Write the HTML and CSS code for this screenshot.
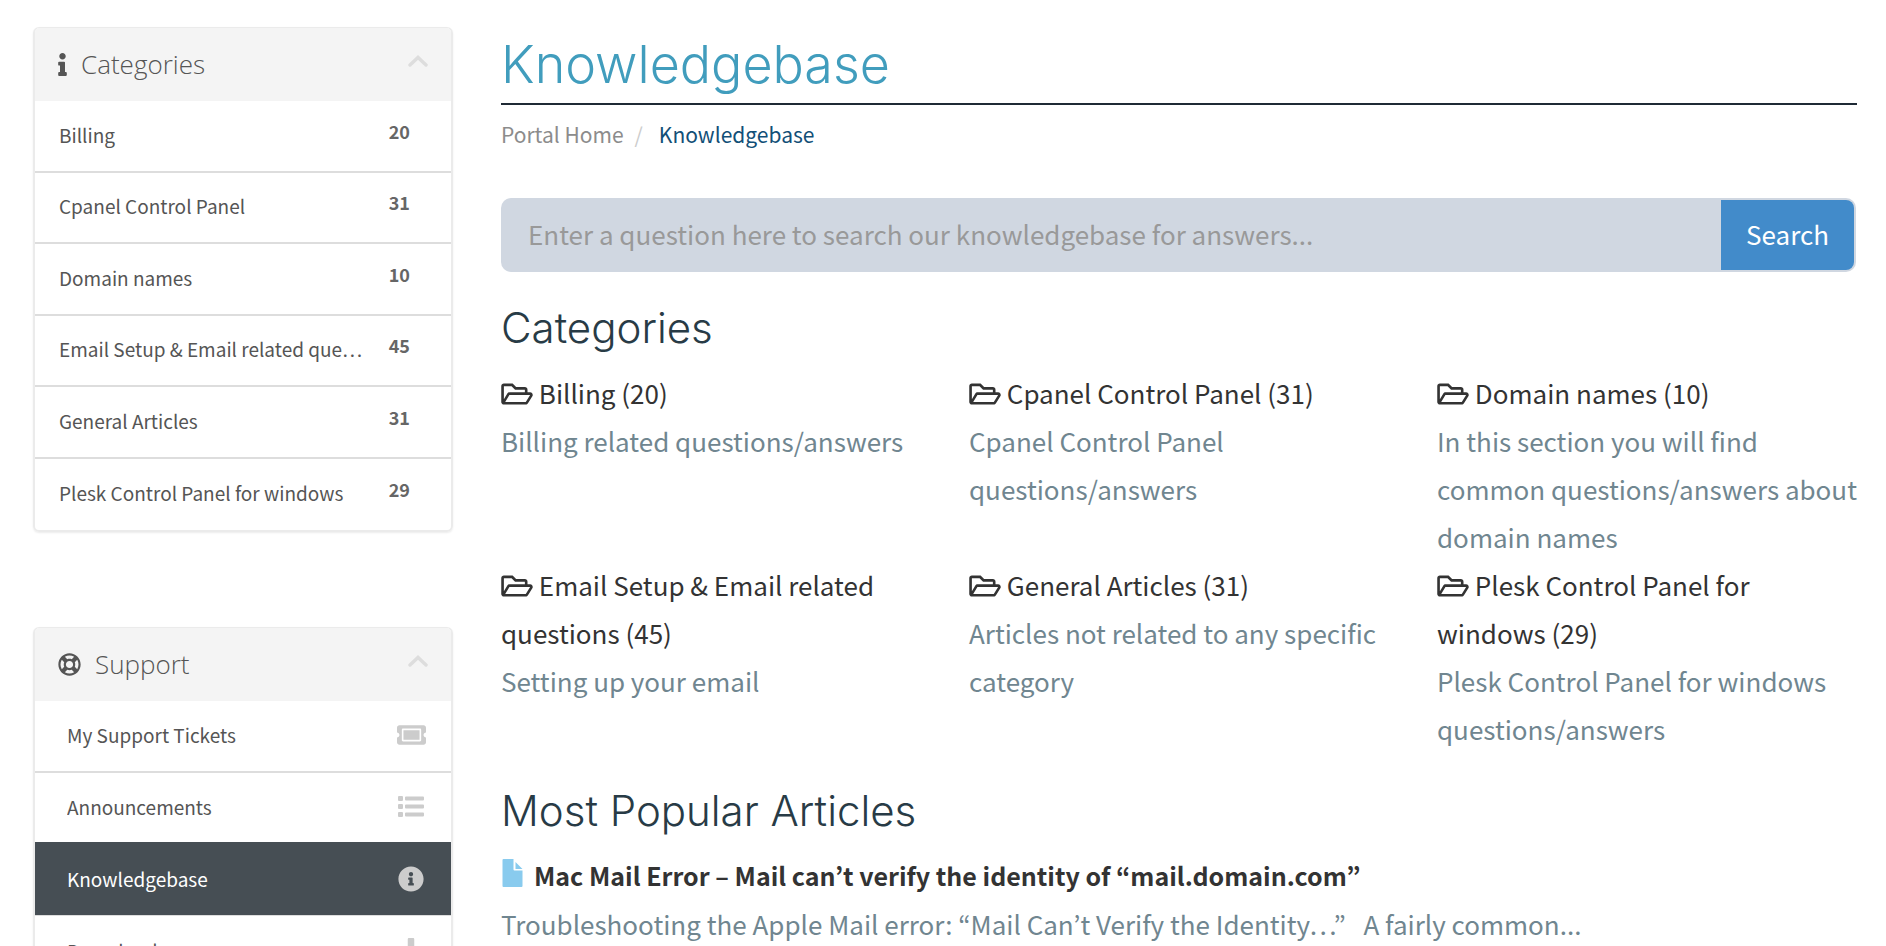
FILE: index.html
```html
<!DOCTYPE html>
<html lang="en">
<head>
<meta charset="utf-8">
<title>Knowledgebase</title>
<link rel="stylesheet" href="styles.css">
</head>
<body>
<svg class="sprite" aria-hidden="true">
  <symbol id="folder" viewBox="0 0 576 512"><path d="M527.9 224H480v-48c0-26.5-21.5-48-48-48H272l-64-64H48C21.5 64 0 85.5 0 112v288c0 26.5 21.5 48 48 48h400c16.5 0 31.9-8.5 40.7-22.6l79.9-128c20-31.9-3-73.4-40.7-73.4zM48 118c0-3.3 2.7-6 6-6h134.1l64 64H426c3.3 0 6 2.7 6 6v42H152c-16.8 0-32.4 8.8-41.1 23.2L48 351.4zm400 282H72l77.2-128H528z"/></symbol>
  <symbol id="chevron" viewBox="0 0 20 12"><path d="M2 10l8-7.600 8 7.600" fill="none" stroke="currentColor" stroke-width="3.400" stroke-linecap="round"/></symbol>
</svg>
<div class="page">
  <aside class="sidebar">
    <section class="panel">
      <header class="panel-head">
        <svg class="icon-info" viewBox="0 0 192 512"><path d="M20 424.229h20V279.771H20c-11.046 0-20-8.954-20-20V212c0-11.046 8.954-20 20-20h112c11.046 0 20 8.954 20 20v212.229h20c11.046 0 20 8.954 20 20V492c0 11.046-8.954 20-20 20H20c-11.046 0-20-8.954-20-20v-47.771c0-11.046 8.954-20 20-20zM96 0C56.235 0 24 32.235 24 72s32.235 72 72 72 72-32.235 72-72S135.764 0 96 0z"/></svg>
        <h3 class="panel-title">Categories</h3>
        <button class="collapse" type="button" aria-label="Collapse categories"><svg class="icon-chevron"><use href="#chevron"/></svg></button>
      </header>
      <nav class="list">
        <a class="item" href="#"><span class="label">Billing</span><span class="count">20</span></a>
        <a class="item" href="#"><span class="label">Cpanel Control Panel</span><span class="count">31</span></a>
        <a class="item" href="#"><span class="label">Domain names</span><span class="count">10</span></a>
        <a class="item" href="#"><span class="label">Email Setup &amp; Email related que…</span><span class="count">45</span></a>
        <a class="item" href="#"><span class="label">General Articles</span><span class="count">31</span></a>
        <a class="item" href="#"><span class="label">Plesk Control Panel for windows</span><span class="count">29</span></a>
      </nav>
    </section>
    <section class="panel">
      <header class="panel-head">
        <svg class="icon-ring" viewBox="0 0 512 512"><path d="M256 504c136.967 0 248-111.033 248-248S392.967 8 256 8 8 119.033 8 256s111.033 248 248 248zm-103.398-76.720l53.411-53.411c31.806 13.506 68.128 13.522 99.974 0l53.411 53.411c-63.217 38.319-143.579 38.319-206.796 0zM336 256c0 44.112-35.888 80-80 80s-80-35.888-80-80 35.888-80 80-80 80 35.888 80 80zm91.280 103.398l-53.411-53.411c13.505-31.806 13.522-68.128 0-99.974l53.411-53.411c38.319 63.217 38.319 143.579 0 206.796zM359.397 84.720l-53.411 53.411c-31.806-13.505-68.128-13.522-99.973 0L152.602 84.720c63.217-38.319 143.579-38.319 206.795 0zM84.720 152.602l53.411 53.411c-13.506 31.806-13.522 68.128 0 99.974L84.720 359.398c-38.319-63.217-38.319-143.579 0-206.796z"/></svg>
        <h3 class="panel-title">Support</h3>
        <button class="collapse" type="button" aria-label="Collapse support"><svg class="icon-chevron"><use href="#chevron"/></svg></button>
      </header>
      <nav class="list list-menu">
        <a class="item" href="#"><span class="label">My Support Tickets</span><span class="slot"><svg class="icon-wide" viewBox="0 0 576 512"><path d="M128 160h320v192H128V160zm400 96c0 26.510 21.490 48 48 48v96c0 26.510-21.490 48-48 48H48c-26.510 0-48-21.490-48-48v-96c26.510 0 48-21.490 48-48s-21.490-48-48-48v-96c0-26.510 21.490-48 48-48h480c26.510 0 48 21.490 48 48v96c-26.510 0-48 21.490-48 48zm-48-104c0-13.255-10.745-24-24-24H120c-13.255 0-24 10.745-24 24v208c0 13.255 10.745 24 24 24h336c13.255 0 24-10.745 24-24V152z"/></svg></span></a>
        <a class="item" href="#"><span class="label">Announcements</span><span class="slot"><svg class="icon" viewBox="0 0 26 26"><path d="M1 2h3a1 1 0 0 1 1 1v3a1 1 0 0 1-1 1H1a1 1 0 0 1-1-1V3a1 1 0 0 1 1-1zM1 10h3a1 1 0 0 1 1 1v3a1 1 0 0 1-1 1H1a1 1 0 0 1-1-1v-3a1 1 0 0 1 1-1zM1 18h3a1 1 0 0 1 1 1v3a1 1 0 0 1-1 1H1a1 1 0 0 1-1-1v-3a1 1 0 0 1 1-1zM8 2.500h17a1 1 0 0 1 1 1v2a1 1 0 0 1-1 1H8a1 1 0 0 1-1-1v-2a1 1 0 0 1 1-1zM8 10.500h17a1 1 0 0 1 1 1v2a1 1 0 0 1-1 1H8a1 1 0 0 1-1-1v-2a1 1 0 0 1 1-1zM8 18.500h17a1 1 0 0 1 1 1v2a1 1 0 0 1-1 1H8a1 1 0 0 1-1-1v-2a1 1 0 0 1 1-1z"/></svg></span></a>
        <a class="item active" href="#" aria-current="page"><span class="label">Knowledgebase</span><span class="slot"><svg class="icon" viewBox="0 0 512 512"><path d="M256 8C119.043 8 8 119.083 8 256c0 136.997 111.043 248 248 248s248-111.003 248-248C504 119.083 392.957 8 256 8zm0 110c23.196 0 42 18.804 42 42s-18.804 42-42 42-42-18.804-42-42 18.804-42 42-42zm56 254c0 6.627-5.373 12-12 12h-88c-6.627 0-12-5.373-12-12v-24c0-6.627 5.373-12 12-12h12v-64h-12c-6.627 0-12-5.373-12-12v-24c0-6.627 5.373-12 12-12h64c6.627 0 12 5.373 12 12v100h12c6.627 0 12 5.373 12 12v24z"/></svg></span></a>
        <a class="item" href="#"><span class="label">Downloads</span><span class="slot"><svg class="icon" viewBox="0 0 512 512"><path d="M216 0h80c13.300 0 24 10.700 24 24v168h87.700c17.800 0 26.700 21.500 14.100 34.100L269.700 378.300c-7.500 7.500-19.800 7.500-27.300 0L90.100 226.100c-12.600-12.600-3.700-34.100 14.100-34.100H192V24c0-13.300 10.700-24 24-24zm296 376v112c0 13.300-10.700 24-24 24H24c-13.300 0-24-10.700-24-24V376c0-13.300 10.700-24 24-24h146.700l49 49c20.100 20.100 52.500 20.100 72.600 0l49-49H488c13.300 0 24 10.700 24 24z"/></svg></span></a>
      </nav>
    </section>
  </aside>
  <main class="main">
    <h1 class="title">Knowledgebase</h1>
    <nav class="crumbs" aria-label="Breadcrumb"><a class="crumb" href="#">Portal Home</a><span class="slash">/</span><a class="crumb current" href="#">Knowledgebase</a></nav>
    <form class="search">
      <input class="search-input" type="text" aria-label="Search the knowledgebase" placeholder="Enter a question here to search our knowledgebase for answers...">
      <button class="search-button" type="button">Search</button>
    </form>
    <h2 class="heading">Categories</h2>
    <div class="categories">
      <div><a class="cat" href="#"><svg class="icon-folder"><use href="#folder"/></svg> Billing (20)</a><p class="text">Billing related questions/answers</p></div>
      <div><a class="cat" href="#"><svg class="icon-folder"><use href="#folder"/></svg> Cpanel Control Panel (31)</a><p class="text">Cpanel Control Panel questions/answers</p></div>
      <div><a class="cat" href="#"><svg class="icon-folder"><use href="#folder"/></svg> Domain names (10)</a><p class="text">In this section you will find common questions/answers about domain names</p></div>
      <div><a class="cat" href="#"><svg class="icon-folder"><use href="#folder"/></svg> Email Setup &amp; Email related questions (45)</a><p class="text">Setting up your email</p></div>
      <div><a class="cat" href="#"><svg class="icon-folder"><use href="#folder"/></svg> General Articles (31)</a><p class="text">Articles not related to any specific category</p></div>
      <div><a class="cat" href="#"><svg class="icon-folder"><use href="#folder"/></svg> Plesk Control Panel for windows (29)</a><p class="text">Plesk Control Panel for windows questions/answers</p></div>
    </div>
    <h2 class="heading popular">Most Popular Articles</h2>
    <article>
      <a class="article-link" href="#"><svg class="icon-file" viewBox="0 0 20 28"><path d="M1 0h10v10.500a1 1 0 0 0 1 1h8V27a1 1 0 0 1-1 1H1a1 1 0 0 1-1-1V1a1 1 0 0 1 1-1zM13 3l7 7h-7z"/></svg>Mac Mail Error – Mail can’t verify the identity of “mail.domain.com”</a>
      <p class="text">Troubleshooting the Apple Mail error: “Mail Can’t Verify the Identity…”&nbsp;&nbsp; A fairly common...</p>
    </article>
  </main>
</div>
</body>
</html>
```
FILE: styles.css
```css
* {
  box-sizing: border-box;
}

html {
  overflow: hidden;
}

body {
  margin: 0;
  background: #fff;
  color: #708690;
  font-family: "Noto Sans CJK KR", "Noto Sans", sans-serif;
  font-size: 26px;
  line-height: 48px;
}

h1, h2, h3, p {
  margin: 0;
}

a {
  text-decoration: none;
}

svg {
  fill: currentColor;
  flex: none;
}

.sprite {
  display: none;
}

.page {
  display: grid;
  grid-template-columns: repeat(4, minmax(0, 1fr));
  column-gap: 48px;
  height: 100vh;
  padding: 27px 29px 0 33px;
}

.sidebar {
  display: flex;
  flex-direction: column;
  gap: 95px;
}

.main {
  grid-column: span 3;
}

/* Sidebar panels */

.panel {
  border: 2px solid #ebebeb;
  border-top-width: 1px;
  border-radius: 6px;
  box-shadow: 0 1px 2px rgba(0, 0, 0, 0.08);
  overflow: hidden;
  flex: none;
}

.panel-head {
  display: flex;
  align-items: center;
  height: 73px;
  padding: 0 23px;
  background: #f4f4f4;
  color: #555;
}

.panel-title {
  flex: 1;
  margin: 0 0 2px 14px;
  font-family: "Open Sans", sans-serif;
  font-size: 26px;
  font-weight: 300;
}

.collapse {
  display: flex;
  padding: 0 0 8px;
  border: 0;
  background: none;
  color: #ddd;
}

.icon-info {
  width: 9px;
  height: 23px;
}

.icon-ring {
  width: 23px;
  height: 23px;
}

.icon-chevron {
  width: 20px;
  height: 12px;
}

.item {
  display: flex;
  gap: 20px;
  align-items: center;
  height: 72px;
  padding: 0 41px 3px 24px;
  border-bottom: 2px solid #ddd;
  color: #555;
  font-size: 19px;
}

.item:nth-child(even) {
  height: 71px;
}

.item:last-child {
  border-bottom: 0;
}

.label {
  flex: 1;
  min-width: 0;
  overflow: hidden;
  text-overflow: ellipsis;
  white-space: nowrap;
}

.count {
  padding-bottom: 8px;
  color: #666;
  font-size: 18px;
  font-weight: 700;
}

.list-menu .item {
  padding: 0 25px 2px 32px;
}

.slot {
  display: flex;
  justify-content: center;
  width: 30px;
  color: #ccc;
}

.icon {
  width: 26px;
  height: 26px;
}

.icon-wide {
  width: 29px;
  height: 26px;
}

.item:has(+ .active) {
  border-color: #464e54;
}

.item.active {
  border-bottom-width: 1px;
  background: #464e54;
  background-clip: padding-box;
  color: #fff;
}

/* Main column */

.title {
  padding: 3px 0;
  border-bottom: 2px solid #1f2a35;
  color: #419dbd;
  font-family: Inter, sans-serif;
  font-size: 52px;
  font-weight: 300;
  line-height: 70px;
}

.crumbs {
  display: flex;
  margin-top: 5px;
  font-size: 21px;
}

.crumb {
  color: #8c8c8c;
}

.slash {
  margin: 0 16px 0 11px;
  color: #ccc;
}

.current {
  color: #124f77;
}

.search {
  display: flex;
  height: 74px;
  margin: 40px 1px 0 0;
  padding: 2px;
  border-radius: 10px;
  background: #d0d7e1;
}

.search-input {
  flex: 1;
  min-width: 0;
  padding: 0 25px 2px;
  border: 0;
  background: none;
  color: #555;
  font: inherit;
}

.search-input::placeholder {
  color: #999;
  opacity: 1;
}

.search-button {
  padding: 0 25px 2px;
  border: 0;
  border-radius: 0 8px 8px 0;
  background: #428bca;
  color: #fff;
  font: inherit;
}

.heading {
  margin-top: 26px;
  color: #283b46;
  font-family: Inter, sans-serif;
  font-size: 42px;
  font-weight: 300;
  line-height: 60px;
}

.categories {
  display: grid;
  grid-template-columns: repeat(3, minmax(0, 1fr));
  column-gap: 48px;
  margin-top: 11px;
}

.cat {
  color: #333;
}

.icon-folder {
  width: 32px;
  height: 28px;
  vertical-align: -4px;
}

.popular {
  margin: 28px 0 9px;
}

.article-link {
  display: flex;
  gap: 11px;
  align-items: center;
  height: 50px;
  padding-left: 1px;
  color: #333;
  font-size: 25px;
  font-weight: 700;
}

.icon-file {
  width: 21px;
  height: 28px;
  margin-bottom: 4px;
  color: #89cbee;
}
```
